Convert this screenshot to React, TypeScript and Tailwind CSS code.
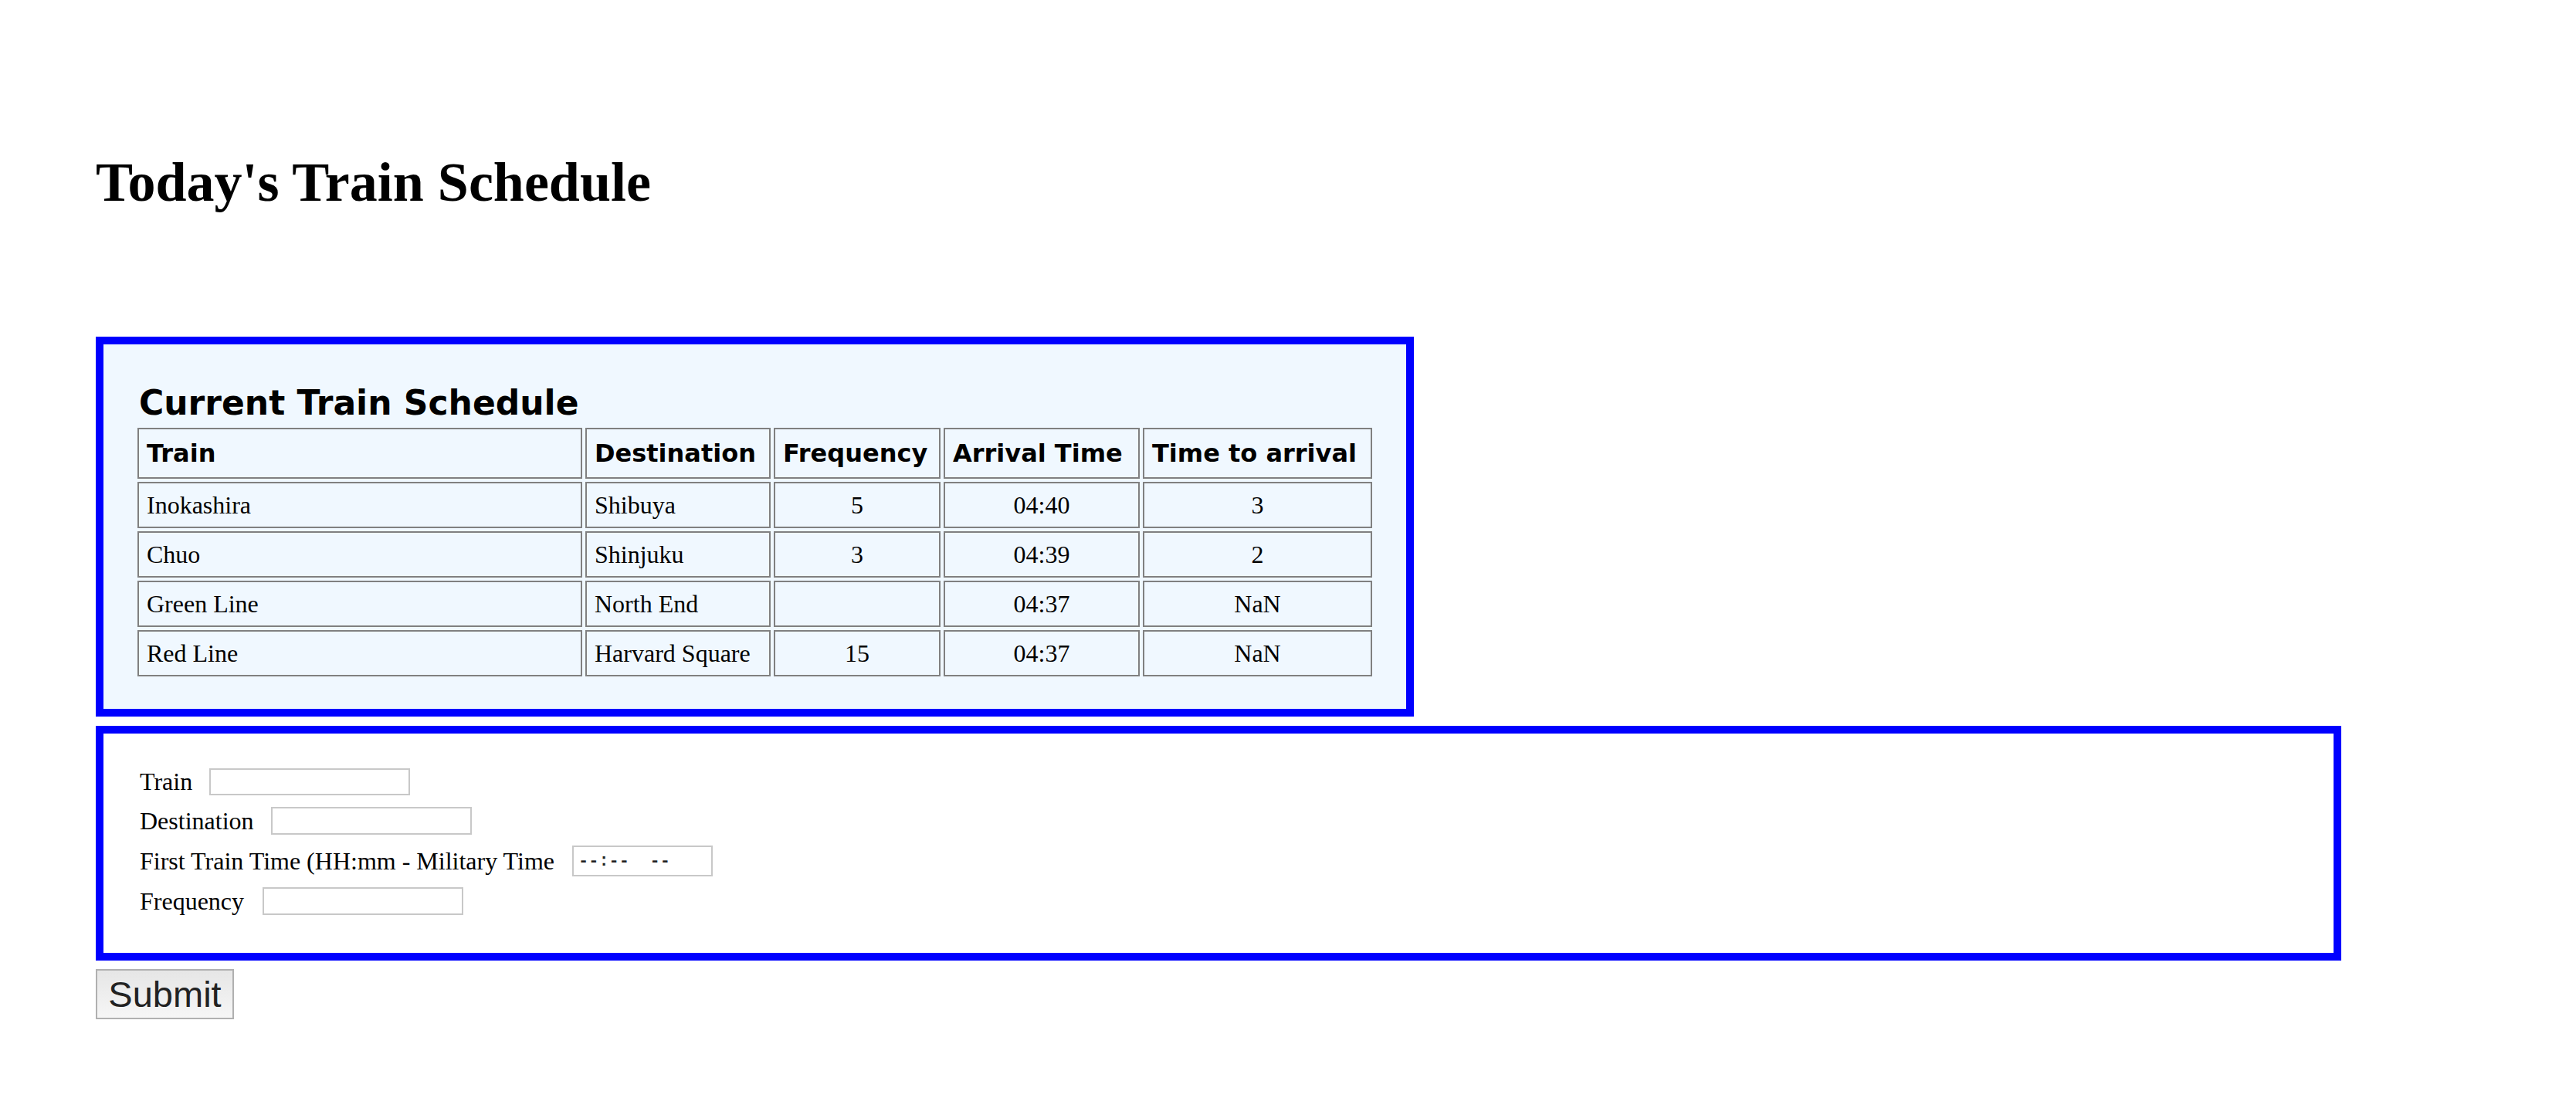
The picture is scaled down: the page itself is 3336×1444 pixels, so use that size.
import React from "react";

interface TrainRow {
  name: string;
  destination: string;
  frequency: string;
  arrival: string;
  minutesAway: string;
}

const trains: TrainRow[] = [
  { name: "Inokashira", destination: "Shibuya", frequency: "5", arrival: "04:40", minutesAway: "3" },
  { name: "Chuo", destination: "Shinjuku", frequency: "3", arrival: "04:39", minutesAway: "2" },
  { name: "Green Line", destination: "North End", frequency: "", arrival: "04:37", minutesAway: "NaN" },
  { name: "Red Line", destination: "Harvard Square", frequency: "15", arrival: "04:37", minutesAway: "NaN" },
];

const thClass =
  "h-[66px] px-[10px] py-0 border-2 border-[#808080] text-left align-middle font-['DejaVu_Sans',sans-serif] text-[32px] font-bold whitespace-nowrap";
const tdClass =
  "h-[60px] px-[10px] py-0 border-2 border-[#808080] align-middle text-[32px] whitespace-nowrap";

function ScheduleTable() {
  return (
    <div className="w-fit border-[10px] border-[#0000ff] bg-[#f0f8ff] px-[40px] pt-[40px] pb-[38px]">
      <h2 className="h-[64px] pl-[6px] pt-[8px] font-['DejaVu_Sans',sans-serif] text-[44px] leading-[56px] font-bold">
        Current Train Schedule
      </h2>
      <table className="table-fixed w-[1607px] border-separate border-spacing-[4px]">
        <thead>
          <tr>
            <th className={`${thClass} w-[576px]`}>Train</th>
            <th className={`${thClass} w-[240px]`}>Destination</th>
            <th className={`${thClass} w-[216px]`}>Frequency</th>
            <th className={`${thClass} w-[254px]`}>Arrival Time</th>
            <th className={`${thClass} w-[297px]`}>Time to arrival</th>
          </tr>
        </thead>
        <tbody>
          {trains.map((t) => (
            <tr key={t.name}>
              <td className={`${tdClass} text-left`}>{t.name}</td>
              <td className={`${tdClass} text-left`}>{t.destination}</td>
              <td className={`${tdClass} text-center`}>{t.frequency}</td>
              <td className={`${tdClass} text-center`}>{t.arrival}</td>
              <td className={`${tdClass} text-center`}>{t.minutesAway}</td>
            </tr>
          ))}
        </tbody>
      </table>
    </div>
  );
}

function TrainForm() {
  return (
    <div className="mt-[12px] w-[2908px] border-[10px] border-[#0000ff] bg-white pl-[47px] pt-[37px] pb-[41px]">
      <div className="flex h-[50px] items-center">
        <label className="text-[32px] leading-none">Train</label>
        <input type="text" className="ml-[22px] h-[35px] w-[260px] border-2 border-[#c8c8c8] bg-white outline-none" />
      </div>
      <div className="flex h-[52px] items-center">
        <label className="text-[32px] leading-none">Destination</label>
        <input type="text" className="ml-[22px] h-[36px] w-[260px] border-2 border-[#c8c8c8] bg-white outline-none" />
      </div>
      <div className="flex h-[52px] items-center">
        <label className="text-[32px] leading-none">First Train Time (HH:mm - Military Time</label>
        <div className="ml-[23px] flex h-[40px] w-[182px] items-center border-2 border-[#c8c8c8] bg-white pl-[6px] font-['Liberation_Mono',monospace] text-[22px] font-bold text-[#222] whitespace-pre">
          {"--:--  --"}
        </div>
      </div>
      <div className="flex h-[52px] items-center">
        <label className="text-[32px] leading-none">Frequency</label>
        <input type="text" className="ml-[24px] h-[36px] w-[260px] border-2 border-[#c8c8c8] bg-white outline-none" />
      </div>
    </div>
  );
}

export default function App() {
  return (
    <div className="min-h-screen bg-white pl-[124px] pt-[196px] font-['Liberation_Serif','Times_New_Roman',serif] text-black">
      <h1 className="mb-[160px] text-[72px] leading-[80px] font-bold">Today's Train Schedule</h1>
      <ScheduleTable />
      <TrainForm />
      <button
        type="submit"
        className="mt-[11px] flex h-[65px] w-[179px] items-center justify-center border-2 border-[#b0b0b0] bg-gradient-to-b from-[#e6e6e6] to-[#f6f6f6] font-['Liberation_Sans',sans-serif] text-[47px] leading-none text-[#222]"
      >
        Submit
      </button>
    </div>
  );
}
